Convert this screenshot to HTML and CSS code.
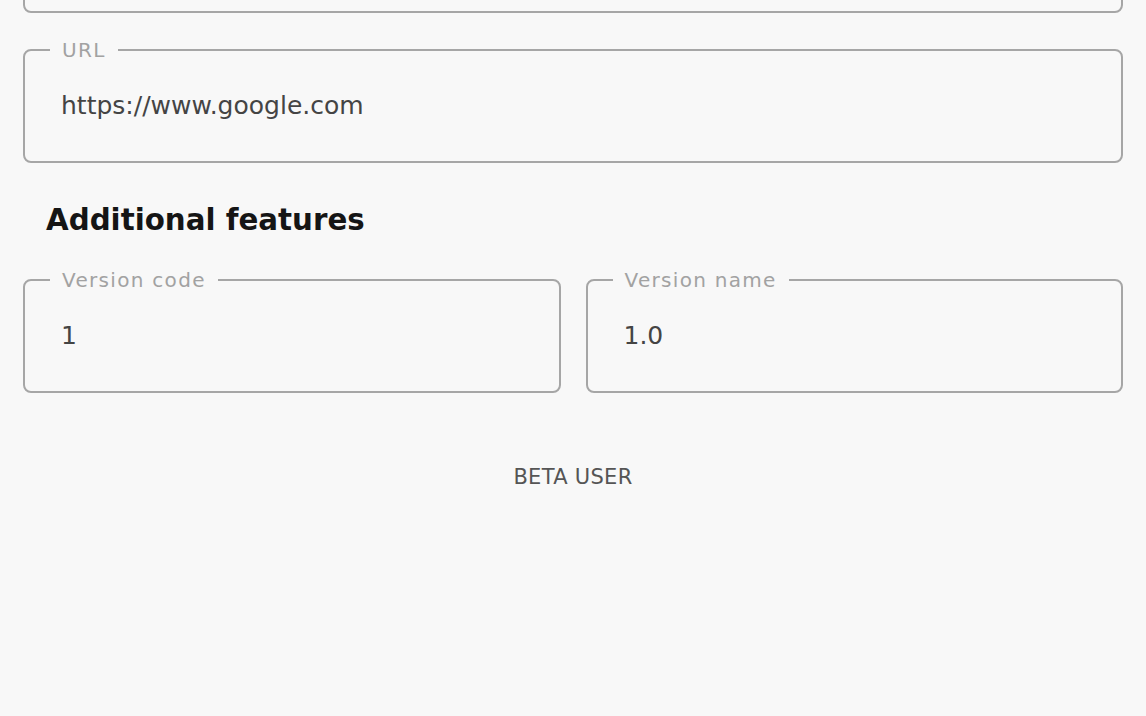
FILE: index.html
```html
<!DOCTYPE html>
<html>
<head>
<meta charset="utf-8">
<link rel="stylesheet" href="styles.css">
</head>
<body>
<main class="form">
  <div class="field field-cut"></div>
  <fieldset class="field field-url">
    <legend class="field-label">URL</legend>
    <div class="field-value">https://www.google.com</div>
  </fieldset>
  <h2 class="section-title">Additional features</h2>
  <div class="row">
    <fieldset class="field">
      <legend class="field-label">Version code</legend>
      <div class="field-value">1</div>
    </fieldset>
    <fieldset class="field">
      <legend class="field-label">Version name</legend>
      <div class="field-value">1.0</div>
    </fieldset>
  </div>
  <button class="text-button">BETA USER</button>
</main>
</body>
</html>
```

FILE: styles.css
```css
html, body {
  margin: 0;
  padding: 0;
  background: #f8f8f8;
  height: 100%;
}
body {
  font-family: "DejaVu Sans", sans-serif;
  color: #222;
}
.form {
  display: flex;
  flex-direction: column;
  padding: 0 23px;
}
.field {
  margin: 0;
  border: 2px solid #a6a6a6;
  border-radius: 8px;
  padding: 0 0 13px 36px;
  min-width: 0;
  background: #f8f8f8;
}
.field-cut {
  height: 40px;
  margin-top: -31px;
  padding: 0;
}
.field-url {
  margin-top: 25px;
}
.field-label {
  margin-left: -11px;
  padding: 0 12px;
  font-size: 20px;
  line-height: 24px;
  color: #a2a2a2;
  letter-spacing: 1.3px;
}
.field-value {
  height: 86px;
  display: flex;
  align-items: center;
  font-size: 25px;
  color: #444;
}
.section-title {
  margin: 39px 0 30px 23px;
  font-size: 29.3px;
  line-height: 36px;
  font-weight: 700;
  color: #151515;
}
.row {
  display: grid;
  grid-template-columns: 1fr 1fr;
  gap: 25px;
}
.text-button {
  align-self: center;
  margin-top: 72px;
  border: 0;
  background: none;
  font-family: "DejaVu Sans", sans-serif;
  font-size: 21px;
  line-height: 24px;
  color: #555;
  letter-spacing: 0.3px;
  padding: 0;
}
```
